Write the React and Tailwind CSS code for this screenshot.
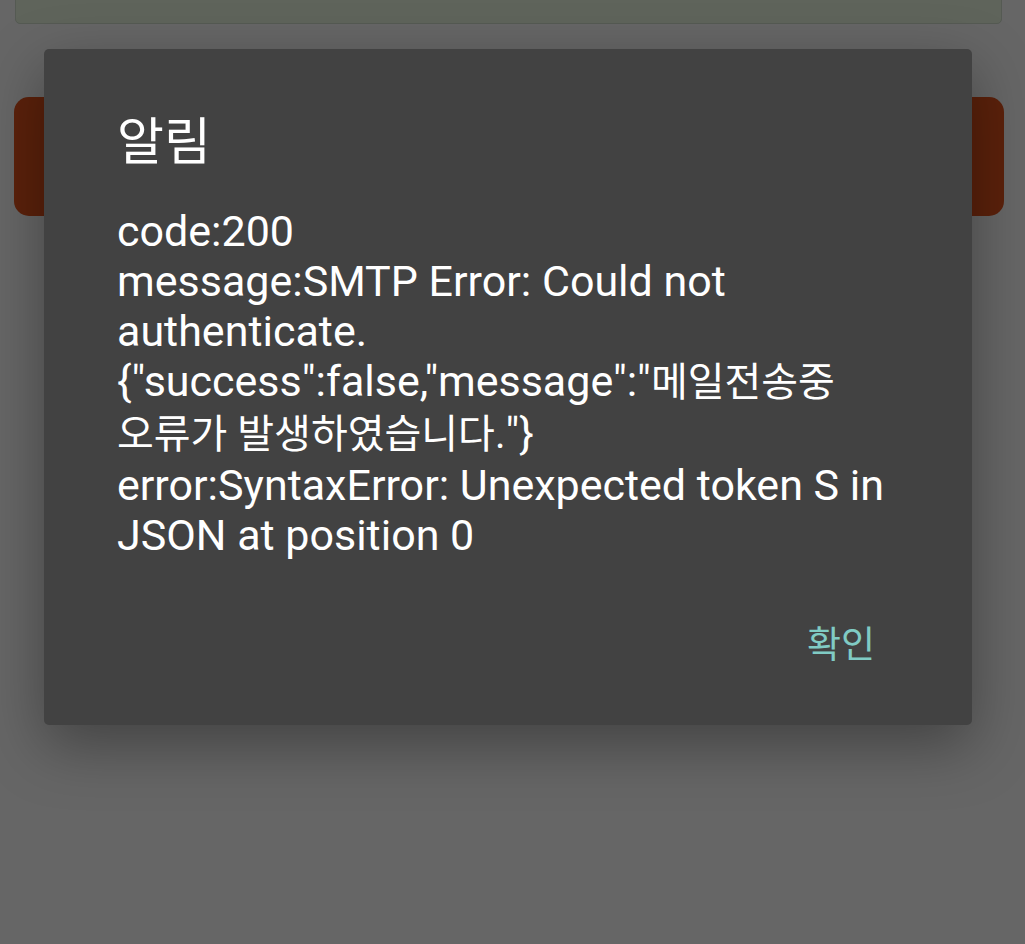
import React from "react";

const FONT = { fontFamily: 'Roboto, "Noto Sans CJK KR", sans-serif' };

// Korean runs come out smaller than the latin text in the reference
const Ko = ({ children }) => <span className="text-[40px]">{children}</span>;

const lines = [
  "code:200",
  "message:SMTP Error: Could not",
  "authenticate.",
  <>{'{"success":false,"message":"'}<Ko>메일전송중</Ko></>,
  <><Ko>오류가 발생하였습니다.</Ko>{'"}'}</>,
  "error:SyntaxError: Unexpected token S in",
  "JSON at position 0",
];

export default function App() {
  return (
    <div className="relative h-[944px] w-[1025px] overflow-hidden bg-[#666666]" style={FONT}>
      {/* page underneath the dim layer */}
      <div>
        <div className="-mt-2 ml-[15px] mr-[23px] h-[32px] rounded-[5px] border border-[#555a53] bg-[#5f645b]" />
        <div className="ml-[14px] mr-[21px] mt-[73px] h-[119px] rounded-[15px] bg-[#5b210b]" />
      </div>

      {/* alert dialog */}
      <div className="absolute left-[44px] top-[49px] h-[676px] w-[928px] rounded-[5px] bg-[#424242] shadow-[0_20px_60px_rgba(0,0,0,0.35)]">
        <div className="flex h-full flex-col px-[73px] pt-[64px]">
          <h2 className="text-[51px] leading-[60px] text-white">알림</h2>
          <div className="mt-[33px] whitespace-nowrap text-[43px] leading-[50px] text-white">
            {lines.map((line, i) => (
              <div key={i}>{line}</div>
            ))}
          </div>
          <div className="mt-[64px] flex justify-end pr-[24px]">
            <button type="button" className="text-[37px] leading-[44px] text-[#80cbc4]">확인</button>
          </div>
        </div>
      </div>
    </div>
  );
}
